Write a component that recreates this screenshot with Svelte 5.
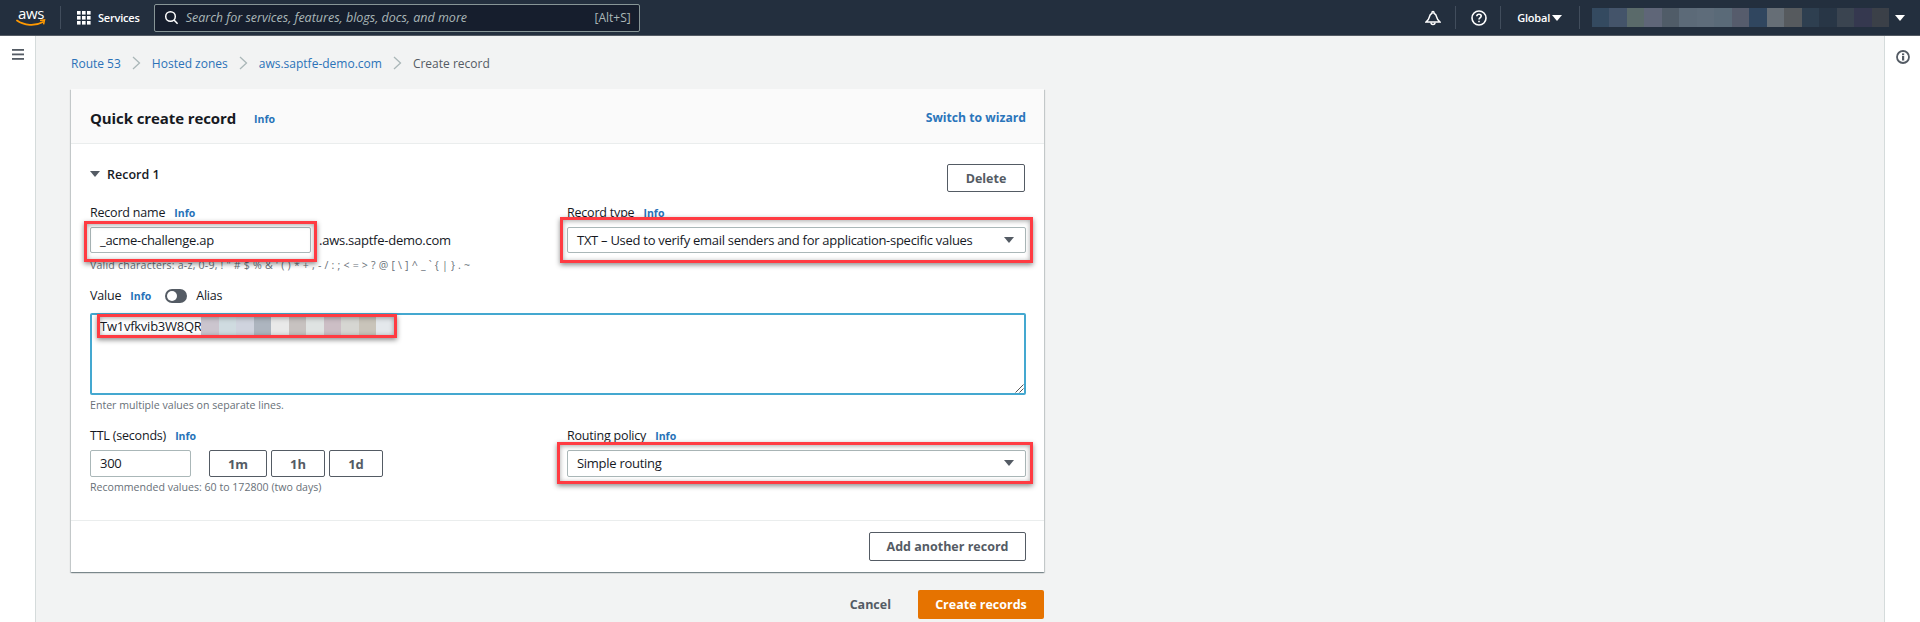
<script>
	const accountBlur = ['#344a60', '#44546a', '#5a6a6a', '#5f6678', '#505c68', '#5c6a78', '#5e6c7a', '#5a6a78', '#565c6c', '#30465f', '#666e76', '#565a5e', '#2e3f50', '#283646', '#3a4450', '#35384f', '#3b4048'];
	const valueBlur = ['#cbc5ce', '#cfdbe0', '#cfd3de', '#adb5bf', '#e9e9e9', '#c7c2c0', '#dfe3e2', '#ccbec5', '#d6d6d2', '#c9c4ba', '#e4e8ec'];
	const crumbs = ['Route 53', 'Hosted zones', 'aws.saptfe-demo.com'];
</script>

<div class="page">
	<header class="topbar">
		<div class="logo">
			<span class="logo-text">aws</span>
			<svg width="30" height="9" viewBox="0 0 30 9"><path d="M1 1.5C8 6.5 19 7.5 27 3" fill="none" stroke="#f90" stroke-width="1.8" stroke-linecap="round" /><path d="M24 1.6l4.5-.6-.9 4.4" fill="none" stroke="#f90" stroke-width="1.5" /></svg>
		</div>
		<span class="sep logo-sep"></span>
		<svg class="grid" width="14" height="14" viewBox="0 0 14 14" fill="#fff">
			{#each [0, 5, 10] as y}
				{#each [0, 5, 10] as x}
					<rect {x} {y} width="3.6" height="3.6" />
				{/each}
			{/each}
		</svg>
		<span class="services">Services</span>
		<div class="search">
			<svg width="15" height="15" viewBox="0 0 15 15" fill="none" stroke="#fff" stroke-width="1.5"><circle cx="6.5" cy="6.5" r="4.8" /><path d="M10 10l3.6 3.8" /></svg>
			<span class="placeholder">Search for services, features, blogs, docs, and more</span>
			<span class="shortcut">[Alt+S]</span>
		</div>
		<svg class="bell" width="16" height="16" viewBox="0 0 16 16" fill="none" stroke="#fff" stroke-width="1.5"><path d="M8 1.5c-.6 0-1 .4-1 1v.8C5.3 4 4.6 5.4 4.3 7.2 4 9 3 10.6 1 12h14c-2-1.400-3-3-3.300-4.800C11.400 5.400 10.700 4 9 3.300v-.8c0-.6-.4-1-1-1z" /><path d="M6 12.500a2 2 0 0 0 4 0" /></svg>
		<span class="sep bell-sep"></span>
		<svg class="help" width="16" height="16" viewBox="0 0 16 16" fill="none" stroke="#fff" stroke-width="1.6"><circle cx="8" cy="8" r="7" /><path d="M5.800 6.200C5.900 4.900 6.800 4.200 8 4.200c1.300 0 2.200.8 2.200 1.900 0 1.800-2.200 1.700-2.200 3.400" /><path d="M8 10.700v1.500" /></svg>
		<span class="sep help-sep"></span>
		<span class="region">Global</span>
		<span class="caret white"></span>
		<span class="sep region-sep"></span>
		<div class="account">
			{#each accountBlur as c}
				<span style="background:{c}"></span>
			{/each}
		</div>
		<span class="caret white account-caret"></span>
	</header>

	<div class="body">
		<aside class="rail">
			<svg class="burger" width="13" height="12" viewBox="0 0 13 12" fill="#545b64"><rect width="12" height="1.800" y="0" /><rect width="12" height="1.800" y="4.500" /><rect width="12" height="1.800" y="9" /></svg>
		</aside>

		<main class="main">
			<nav class="crumbs">
				{#each crumbs as c}
					<a href="#top">{c}</a>
					<svg width="9" height="14" viewBox="0 0 9 14" fill="none" stroke="#aab7b8" stroke-width="1.300"><path d="M1 1l6.500 6L1 13" /></svg>
				{/each}
				<span>Create record</span>
			</nav>

			<section class="card">
				<div class="card-head">
					<h1>Quick create record</h1>
					<a class="info head-info" href="#top">Info</a>
					<a class="wizard" href="#top">Switch to wizard</a>
				</div>

				<div class="card-body">
					<div class="record-head">
						<div class="record-title">
							<span class="caret dark"></span>
							<strong>Record 1</strong>
						</div>
						<button class="btn delete">Delete</button>
					</div>

					<div class="row first-row">
						<div class="col name-col">
							<div class="label">Record name <a class="info" href="#top">Info</a></div>
							<div class="name-line">
								<div class="marked">
									<div class="input name-input">_acme-challenge.ap</div>
									<span class="mark mark-name"></span>
								</div>
								<span class="suffix">.aws.saptfe-demo.com</span>
							</div>
							<div class="hint tight">Valid characters: a-z, 0-9, ! " # $ % &amp; ' ( ) * + , - / : ; &lt; = &gt; ? @ [ \ ] ^ _ ` {'{'} | {'}'} . ~</div>
						</div>
						<div class="col">
							<div class="label">Record type <a class="info" href="#top">Info</a></div>
							<div class="marked">
								<div class="input select">TXT – Used to verify email senders and for application-specific values<span class="caret grey"></span></div>
								<span class="mark mark-type"></span>
							</div>
						</div>
					</div>

					<div class="label value-label">
						Value <a class="info" href="#top">Info</a>
						<span class="toggle"><i></i></span>
						Alias
					</div>
					<div class="textarea marked">
						<span class="value-text">Tw1vfkvib3W8QR</span>
						<span class="value-blur">
							{#each valueBlur as c}
								<span style="background:{c}"></span>
							{/each}
						</span>
						<span class="mark mark-value"></span>
						<svg class="grip" width="10" height="10" viewBox="0 0 10 10" stroke="#555" fill="none"><path d="M1.500 9.500l8-8M5.500 9.500l4-4" /></svg>
					</div>
					<div class="hint value-hint">Enter multiple values on separate lines.</div>

					<div class="row ttl-row">
						<div class="col name-col">
							<div class="label">TTL (seconds) <a class="info" href="#top">Info</a></div>
							<div class="ttl-line">
								<div class="input ttl-input">300</div>
								<button class="btn unit u1m">1m</button>
								<button class="btn unit">1h</button>
								<button class="btn unit">1d</button>
							</div>
							<div class="hint">Recommended values: 60 to 172800 (two days)</div>
						</div>
						<div class="col">
							<div class="label">Routing policy <a class="info" href="#top">Info</a></div>
							<div class="marked">
								<div class="input select">Simple routing<span class="caret grey"></span></div>
								<span class="mark mark-routing"></span>
							</div>
						</div>
					</div>
				</div>

				<div class="card-foot">
					<button class="btn add">Add another record</button>
				</div>
			</section>

			<div class="actions">
				<span class="cancel">Cancel</span>
				<button class="create">Create records</button>
			</div>
		</main>

		<aside class="rail right">
			<svg width="14" height="14" viewBox="0 0 14 14" fill="none"><circle cx="7" cy="7" r="6" stroke="#545b64" stroke-width="1.800" /><rect x="6" y="6" width="2.200" height="4.500" fill="#545b64" /><rect x="6" y="3.400" width="2.200" height="1.800" fill="#545b64" /></svg>
		</aside>
	</div>
</div>

<style>
	:global(body) {
		margin: 0;
		background: #f2f3f3;
	}

	.page {
		height: 622px;
		overflow: hidden;
		font-family: "Open Sans", "Noto Sans", sans-serif;
		font-size: 13px;
		color: #16191f;
		display: flex;
		flex-direction: column;
	}

	.topbar {
		height: 36px;
		flex: none;
		background: #232f3e;
		border-bottom: 1px solid #545b64;
		box-sizing: border-box;
		display: flex;
		align-items: center;
		color: #fff;
		padding: 0 15px 0 16px;
	}

	.logo {
		width: 30px;
		display: flex;
		flex-direction: column;
		align-items: center;
		line-height: 12px;
		margin-top: -1px;
	}

	.logo-text {
		font-size: 15px;
		font-weight: 400;
		letter-spacing: -0.3px;
	}

	.sep {
		width: 1px;
		height: 23px;
		background: #414d5c;
		flex: none;
	}

	.logo-sep {
		margin-left: 14px;
	}

	.grid {
		margin-left: 16px;
	}

	.services {
		margin-left: 7px;
		font-size: 11px;
		font-weight: 600;
		letter-spacing: -0.2px;
	}

	.search {
		margin-left: 14px;
		width: 486px;
		height: 28px;
		box-sizing: border-box;
		border: 1px solid #879596;
		border-radius: 2px;
		background: #161e2d;
		display: flex;
		align-items: center;
		padding: 0 8px 0 9px;
	}

	.placeholder {
		margin-left: 7px;
		font-style: italic;
		font-size: 12.500px;
		color: #aab7b8;
	}

	.shortcut {
		margin-left: auto;
		font-size: 12px;
		color: #aab7b8;
	}

	.bell {
		margin-left: auto;
	}

	.bell-sep {
		margin-left: 14px;
	}

	.help {
		margin-left: 15px;
	}

	.help-sep {
		margin-left: 13px;
	}

	.region {
		margin-left: 16px;
		font-size: 11px;
		font-weight: 600;
		letter-spacing: -0.2px;
	}

	.caret {
		display: inline-block;
		width: 0;
		height: 0;
		border-style: solid;
		border-color: transparent;
		border-width: 6px 5px 0;
	}

	.caret.white {
		border-top-color: #fff;
		margin-left: 2px;
	}

	.caret.dark,
	.caret.grey {
		border-top-color: #545b64;
	}

	.region-sep {
		margin-left: 17px;
	}

	.account {
		margin-left: 12px;
		display: flex;
		width: 297px;
		height: 19px;
	}

	.account span {
		flex: 1;
	}

	.account-caret {
		margin-left: 6px !important;
	}

	.body {
		flex: 1;
		display: flex;
		min-height: 0;
	}

	.rail {
		width: 36px;
		flex: none;
		background: #fff;
		border-right: 1px solid #d5dbdb;
		box-sizing: border-box;
		padding: 13px 0 0 12px;
	}

	.rail.right {
		border-right: 0;
		border-left: 1px solid #d5dbdb;
		padding: 14px 0 0 11px;
	}

	.burger {
		display: block;
	}

	.main {
		flex: 1;
		padding: 18px 0 0 35px;
		min-width: 0;
	}

	.crumbs {
		height: 18px;
		display: flex;
		align-items: center;
		gap: 11px;
		font-size: 12px;
		color: #545b64;
	}

	a {
		color: #2b72b8;
		text-decoration: none;
	}

	.card {
		margin-top: 17px;
		width: 973px;
		box-sizing: border-box;
		background: #fff;
		box-shadow: 0 1px 1px 0 rgba(0, 28, 36, 0.3), 1px 1px 1px 0 rgba(0, 28, 36, 0.15), -1px 1px 1px 0 rgba(0, 28, 36, 0.15);
	}

	.card-head {
		height: 55px;
		box-sizing: border-box;
		background: #fafafa;
		border-bottom: 1px solid #eaeded;
		display: flex;
		align-items: center;
		padding: 3px 18px 0 19px;
	}

	h1 {
		margin: 0;
		font-size: 15px;
		font-weight: 700;
		letter-spacing: -0.1px;
	}

	.info {
		font-size: 10.500px;
		font-weight: 700;
		color: #2672b8;
	}

	.head-info {
		margin-left: 18px;
		padding-top: 2px;
	}

	.wizard {
		margin-left: auto;
		font-size: 12.200px;
		font-weight: 700;
		color: #2a75bb;
	}

	.card-body {
		padding: 20px 18px 0 19px;
		height: 376px;
		box-sizing: border-box;
	}

	.record-head {
		height: 28px;
		display: flex;
		align-items: flex-start;
		justify-content: space-between;
	}

	.record-title {
		height: 20px;
		display: flex;
		align-items: center;
		gap: 7px;
	}

	.record-title strong {
		font-size: 12.500px;
		font-weight: 600;
	}

	.btn {
		font-family: inherit;
		font-size: 12.500px;
		font-weight: 700;
		color: #545b64;
		background: #fff;
		border: 1px solid #545b64;
		border-radius: 2px;
		padding: 0;
		box-sizing: border-box;
	}

	.delete {
		width: 78px;
		height: 28px;
		margin-right: 1px;
	}

	.row {
		display: grid;
		grid-template-columns: 477px 459px;
	}

	.first-row {
		margin-top: 13px;
	}

	.label {
		height: 16px;
		line-height: 16px;
		font-size: 12.500px;
		letter-spacing: -0.2px;
		color: #16191f;
		margin-bottom: 6px;
		white-space: nowrap;
	}

	.label .info {
		margin-left: 6px;
		letter-spacing: 0;
	}

	.input {
		height: 26px;
		box-sizing: border-box;
		border: 1px solid #aab7b8;
		border-radius: 2px;
		background: #fff;
		display: flex;
		align-items: center;
		padding-left: 9px;
		font-size: 13px;
		letter-spacing: -0.28px;
	}

	.select {
		justify-content: space-between;
		padding-right: 11px;
	}

	.name-line {
		display: flex;
		align-items: center;
	}

	.name-input {
		width: 221px;
	}

	.marked {
		position: relative;
	}

	.mark {
		position: absolute;
		box-sizing: border-box;
		border: 3px solid #ff3b42;
		box-shadow: 0 2px 5px rgba(0, 0, 0, 0.45), inset 0 1px 5px rgba(0, 0, 0, 0.35);
		pointer-events: none;
	}

	.mark-name {
		left: -6px;
		right: -6px;
		top: -6px;
		bottom: -9px;
	}

	.mark-type {
		left: -7px;
		right: -7px;
		top: -10px;
		bottom: -10px;
	}

	.mark-routing {
		left: -10px;
		right: -7px;
		top: -8px;
		bottom: -7px;
	}

	.mark-value {
		left: 5px;
		top: -1px;
		width: 300px;
		height: 24px;
	}

	.suffix {
		margin-left: 8px;
		font-size: 13px;
		letter-spacing: -0.25px;
	}

	.hint {
		font-size: 10.600px;
		color: #687078;
		line-height: 14px;
		margin-top: 3px;
		white-space: nowrap;
	}

	.hint.tight {
		margin-top: 5px;
		letter-spacing: 0.2px;
	}

	.value-label {
		display: flex;
		align-items: center;
		margin-top: 16px;
		margin-bottom: 9px;
		gap: 0;
	}

	.value-label .info {
		margin-left: 9px;
		margin-right: 14px;
	}

	.toggle {
		width: 22px;
		height: 14px;
		border-radius: 7px;
		background: #545b64;
		margin-right: 9px;
		position: relative;
	}

	.toggle i {
		position: absolute;
		left: 2px;
		top: 2px;
		width: 10px;
		height: 10px;
		border-radius: 50%;
		background: #fff;
	}

	.textarea {
		height: 82px;
		box-sizing: border-box;
		border: 2px solid #44a8d0;
		border-radius: 2px;
		background: #fff;
		display: flex;
		align-items: flex-start;
		padding: 2px 0 0 8px;
		font-size: 13px;
		line-height: 18px;
		letter-spacing: -0.25px;
	}

	.value-text {
		width: 101px;
		flex: none;
		overflow: hidden;
		white-space: nowrap;
	}

	.value-blur {
		display: flex;
		width: 193px;
		height: 18px;
	}

	.value-blur span {
		flex: 1;
	}

	.grip {
		position: absolute;
		right: 0;
		bottom: 0;
	}

	.value-hint {
		margin-top: 3px;
	}

	.ttl-row {
		margin-top: 16px;
	}

	.ttl-row .label {
		margin-bottom: 6px;
	}

	.ttl-line {
		display: flex;
		height: 27px;
		gap: 4px;
	}

	.ttl-input {
		height: 27px;
		width: 101px;
		margin-right: 14px;
		padding-bottom: 1px;
	}

	.unit {
		width: 54px;
		font-size: 13px;
	}

	.u1m {
		width: 58px;
	}

	.ttl-row .select {
		height: 27px;
		padding-bottom: 1px;
	}

	.card-foot {
		border-top: 1px solid #eaeded;
		height: 52px;
		box-sizing: border-box;
		display: flex;
		justify-content: flex-end;
		align-items: flex-start;
		padding: 11px 18px 0 0;
	}

	.add {
		width: 157px;
		height: 29px;
	}

	.actions {
		width: 973px;
		margin-top: 18px;
		display: flex;
		justify-content: flex-end;
		align-items: center;
	}

	.cancel {
		font-size: 12.500px;
		font-weight: 700;
		color: #545b64;
		margin-right: 27px;
	}

	.create {
		width: 126px;
		height: 29px;
		font-family: inherit;
		font-size: 12.500px;
		font-weight: 700;
		color: #fff;
		background: #e67300;
		border: 0;
		border-radius: 2px;
		padding: 0;
	}
</style>
